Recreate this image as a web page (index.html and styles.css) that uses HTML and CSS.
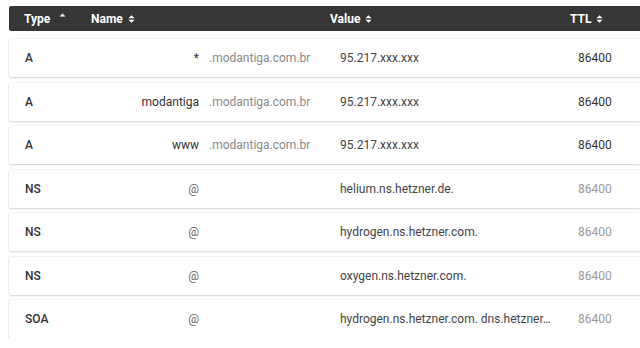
FILE: index.html
```html
<!DOCTYPE html>
<html lang="en">
<head>
    <meta charset="UTF-8">
    <title>DNS Records</title>
    <link rel="stylesheet" href="styles.css">
</head>
<body>
    <div class="records">
        <div class="records-head">
            <div class="th">Type
                <svg class="sort up" viewBox="0 0 8 10"><path d="M0.5 4.5 L4 1 L7.5 4.5 Z"/></svg>
            </div>
            <div class="th">Name
                <svg class="sort" viewBox="0 0 8 10"><path d="M0.5 4.2 L4 0.7 L7.5 4.2 Z M0.5 5.8 L4 9.3 L7.5 5.8 Z"/></svg>
            </div>
            <div class="th">Value
                <svg class="sort" viewBox="0 0 8 10"><path d="M0.5 4.2 L4 0.7 L7.5 4.2 Z M0.5 5.8 L4 9.3 L7.5 5.8 Z"/></svg>
            </div>
            <div class="th">TTL
                <svg class="sort" viewBox="0 0 8 10"><path d="M0.5 4.2 L4 0.7 L7.5 4.2 Z M0.5 5.8 L4 9.3 L7.5 5.8 Z"/></svg>
            </div>
        </div>

        <div class="record">
            <div class="type">A</div>
            <div class="name">*</div>
            <div class="zone">.modantiga.com.br</div>
            <div class="value">95.217.xxx.xxx</div>
            <div class="ttl">86400</div>
        </div>
        <div class="record">
            <div class="type">A</div>
            <div class="name">modantiga</div>
            <div class="zone">.modantiga.com.br</div>
            <div class="value">95.217.xxx.xxx</div>
            <div class="ttl">86400</div>
        </div>
        <div class="record">
            <div class="type">A</div>
            <div class="name">www</div>
            <div class="zone">.modantiga.com.br</div>
            <div class="value">95.217.xxx.xxx</div>
            <div class="ttl">86400</div>
        </div>
        <div class="record">
            <div class="type">NS</div>
            <div class="name at">@</div>
            <div class="zone"></div>
            <div class="value">helium.ns.hetzner.de.</div>
            <div class="ttl muted">86400</div>
        </div>
        <div class="record">
            <div class="type">NS</div>
            <div class="name at">@</div>
            <div class="zone"></div>
            <div class="value">hydrogen.ns.hetzner.com.</div>
            <div class="ttl muted">86400</div>
        </div>
        <div class="record">
            <div class="type">NS</div>
            <div class="name at">@</div>
            <div class="zone"></div>
            <div class="value">oxygen.ns.hetzner.com.</div>
            <div class="ttl muted">86400</div>
        </div>
        <div class="record">
            <div class="type">SOA</div>
            <div class="name at">@</div>
            <div class="zone"></div>
            <div class="value">hydrogen.ns.hetzner.com. dns.hetzner.com. 2021051901 86400 10800 3600000 3600</div>
            <div class="ttl muted">86400</div>
        </div>
    </div>
</body>
</html>
```

FILE: styles.css
```css
body {
    margin: 0;
    background: #fff;
    font-family: Roboto, 'Liberation Sans', sans-serif;
    font-size: 12px;
    color: #333;
    overflow: hidden;
}

.records {
    width: 631px;
    margin: 6px 0 0 9px;
    display: flex;
    flex-direction: column;
    gap: 5.5px;
}

.records-head {
    display: grid;
    grid-template-columns: 67px 239px 240px 1fr;
    align-items: center;
    height: 25px;
    padding-left: 15px;
    margin-bottom: 2.5px;
    background: #363636;
    color: #fff;
    font-weight: 700;
    border-radius: 2px 0 0 2px;
}

.th {
    display: flex;
    align-items: center;
    gap: 5px;
}

.sort {
    width: 7px;
    height: 10px;
    fill: #fff;
}

.sort.up {
    margin-left: 4px;
    margin-top: -3px;
}

.record {
    display: grid;
    grid-template-columns: 105px 69px 141px 238px 1fr;
    align-items: center;
    height: 38px;
    padding-left: 16px;
    background: #fff;
    border-radius: 2px 0 0 2px;
    box-shadow: 0 1px 2px rgba(0, 0, 0, 0.14), 0 0 0 1px rgba(0, 0, 0, 0.04);
}

.type {
    font-weight: 500;
    color: #333;
}

.name {
    text-align: right;
    color: #333;
}

.name.at {
    color: #666;
}

.zone {
    padding-left: 10px;
    color: #888;
}

.value {
    padding-right: 26px;
    color: #444;
    white-space: nowrap;
    overflow: hidden;
    text-overflow: ellipsis;
}

.ttl {
    color: #333;
}

.ttl.muted {
    color: #999;
}
```
